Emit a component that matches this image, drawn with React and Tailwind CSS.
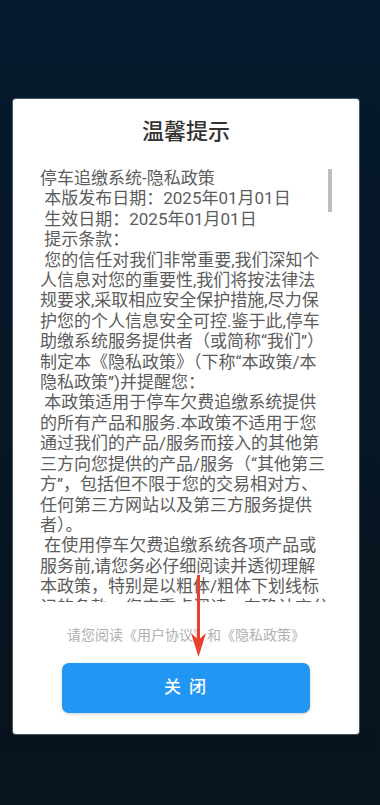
import React from "react";

const lines = [
  "停车追缴系统-隐私政策",
  " 本版发布日期：2025年01月01日",
  " 生效日期：2025年01月01日",
  " 提示条款：",
  " 您的信任对我们非常重要,我们深知个",
  "人信息对您的重要性,我们将按法律法",
  "规要求,采取相应安全保护措施,尽力保",
  "护您的个人信息安全可控.鉴于此,停车",
  "助缴系统服务提供者（或简称“我们”）",
  "制定本《隐私政策》（下称“本政策/本",
  "隐私政策”)并提醒您：",
  " 本政策适用于停车欠费追缴系统提供",
  "的所有产品和服务.本政策不适用于您",
  "通过我们的产品/服务而接入的其他第",
  "三方向您提供的产品/服务（“其他第三",
  "方”，包括但不限于您的交易相对方、",
  "任何第三方网站以及第三方服务提供",
  "者）。",
  " 在使用停车欠费追缴系统各项产品或",
  "服务前,请您务必仔细阅读并透彻理解",
  "本政策，特别是以粗体/粗体下划线标",
  "记的条款，您应重点阅读，在确认充分",
];

export default function App() {
  return (
    <div
      className="relative w-[380px] h-[805px] overflow-hidden bg-linear-to-b from-[#051a2f] to-[#08131b] pt-[99px]"
      style={{ fontFamily: '"Roboto", "Noto Sans CJK SC", sans-serif' }}
    >
      <div className="mx-[13px] w-[346px] h-[635px] bg-white rounded-[3px] shadow-[0_0_0_1px_rgba(200,205,210,0.35)] flex flex-col pt-[19px]">
        <div className="text-center text-[22px] leading-[28px] text-[#333333] font-medium">
          温馨提示
        </div>
        <div className="relative mt-[22px] h-[434px] overflow-hidden pl-[27px]">
          {lines.map((l, i) => (
            <div
              key={i}
              className="whitespace-pre text-[17px] leading-[20.4px] text-[#5c5c5c]"
            >
              {l}
            </div>
          ))}
          <div className="absolute left-[315px] top-[1px] w-[4px] h-[43px] bg-[#bdbdbd]" />
        </div>
        <div className="mt-[23px] text-center text-[14px] leading-[20px] text-[#b0b0b0]">
          请您阅读《用户协议》和《隐私政策》
        </div>
        <div className="mt-[18px] mx-[49px] h-[50px] rounded-[7px] bg-[#2196f3] shadow-[0_1px_3px_rgba(0,0,0,0.2)] flex items-center justify-center text-white text-[17px] font-medium tracking-[2px]">
          关 闭
        </div>
      </div>
      <svg
        className="absolute left-0 top-0 pointer-events-none"
        width="380"
        height="805"
        viewBox="0 0 380 805"
      >
        <line x1="198.5" y1="575" x2="198.5" y2="642" stroke="#e8412c" strokeWidth="3" />
        <polygon points="191,633 198.5,640 206,633 198.5,657" fill="#e8412c" />
      </svg>
    </div>
  );
}
